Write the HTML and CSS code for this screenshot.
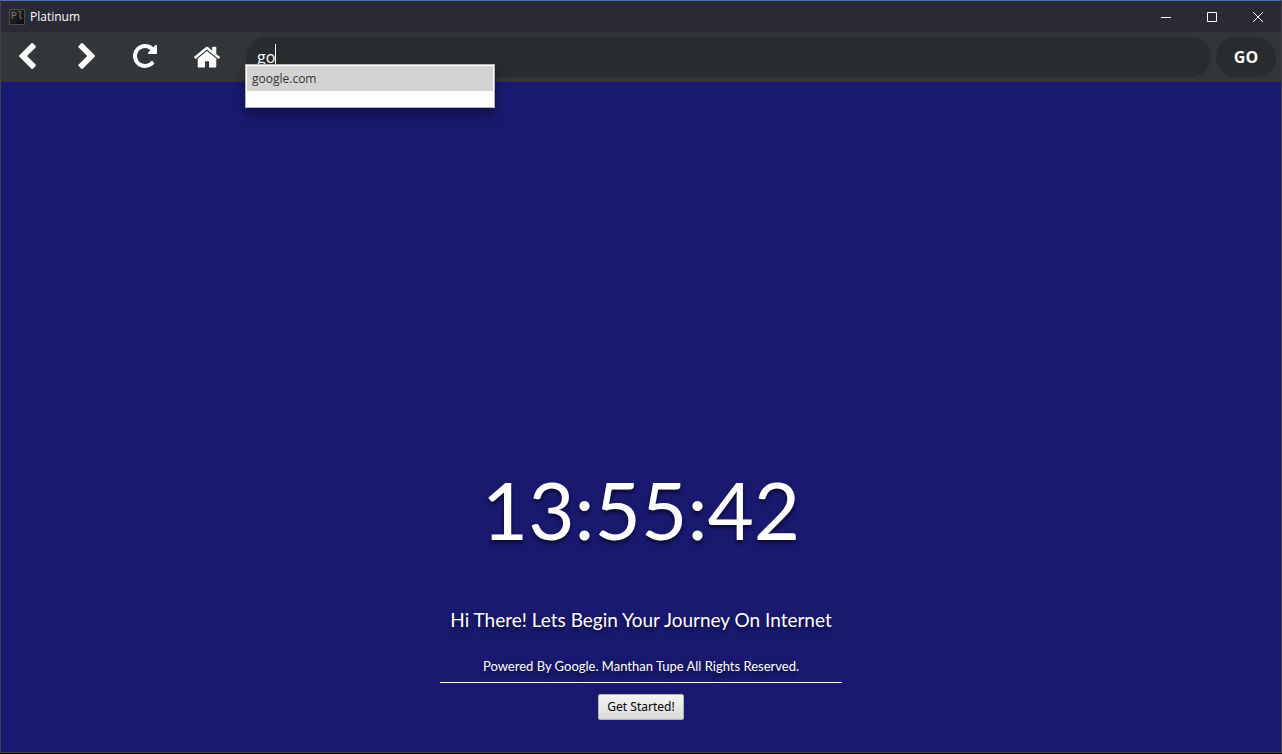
FILE: index.html
```html
<!DOCTYPE html>
<html lang="en">
<head>
<meta charset="utf-8">
<title>Platinum</title>
<link rel="stylesheet" href="styles.css">
</head>
<body>
<div class="window">
  <header class="titlebar">
    <span class="app-icon" aria-hidden="true">Pl</span>
    <h1 class="app-name">Platinum</h1>
    <div class="window-controls">
      <button class="window-button" type="button" aria-label="Minimize"><svg width="10" height="10" viewBox="0 0 10 10"><path d="M0 5.500h10"/></svg></button>
      <button class="window-button" type="button" aria-label="Maximize"><svg width="10" height="10" viewBox="0 0 10 10"><path d="M.5.500h9v9h-9z"/></svg></button>
      <button class="window-button" type="button" aria-label="Close"><svg width="10" height="10" viewBox="0 0 10 10"><path d="M0 0l10 10M10 0L0 10"/></svg></button>
    </div>
  </header>
  <nav class="toolbar">
    <button class="nav-button" type="button" aria-label="Back">
      <svg width="17" height="26" viewBox="154 26 1036 1612"><path d="M1171 301l-531 531 531 531q19 19 19 45t-19 45l-166 166q-19 19-45 19t-45-19l-742-742q-19-19-19-45t19-45l742-742q19-19 45-19t45 19l166 166q19 19 19 45t-19 45z"/></svg>
    </button>
    <button class="nav-button" type="button" aria-label="Forward">
      <svg width="23" height="26" viewBox="-290 26 1426 1612"><path transform="translate(1230 0) scale(-1 1)" d="M1171 301l-531 531 531 531q19 19 19 45t-19 45l-166 166q-19 19-45 19t-45-19l-742-742q-19-19-19-45t19-45l742-742q19-19 45-19t45 19l166 166q19 19 19 45t-19 45z"/></svg>
    </button>
    <button class="nav-button" type="button" aria-label="Reload">
      <svg width="24" height="24" viewBox="0 128 1536 1536"><path d="M1536 256v448q0 26-19 45t-45 19h-448q-42 0-59-40-17-39 14-69l138-138q-148-137-349-137-104 0-198.500 40.500t-163.500 109.500-109.500 163.500-40.500 198.500 40.500 198.500 109.500 163.500 163.500 109.500 198.500 40.500q119 0 225-52t179-147q7-10 23-12 15 0 25 9l137 138q9 8 9.500 20.500t-7.500 22.500q-109 132-264 204.500t-327 72.500q-156 0-298-61t-245-164-164-245-61-298 61-298 164-245 245-164 298-61q147 0 284.500 55.500t244.500 156.500l130-129q29-31 70-14 39 17 39 59z"/></svg>
    </button>
    <button class="nav-button" type="button" aria-label="Home">
      <svg width="26" height="24" viewBox="26 80 1612 1488"><path d="M1408 992v480q0 26-19 45t-45 19h-384v-384h-256v384h-384q-26 0-45-19t-19-45v-480q0-1 .5-3t.5-3l575-474 575 474q1 2 1 6zm223-69l-62 74q-8 9-21 11h-3q-13 0-21-7l-692-577-692 577q-12 8-24 7-13-2-21-11l-62-74q-8-10-7-23.500t11-21.500l719-599q32-26 76-26t76 26l244 204v-195q0-14 9-23t23-9h192q14 0 23 9t9 23v408l219 182q10 8 11 21.500t-7 23.500z"/></svg>
    </button>
    <form class="address">
      <div class="address-field">
        <input class="address-input" type="text" value="go" aria-label="Address" autocomplete="off">
        <span class="caret" aria-hidden="true"></span>
        <ul class="suggestions">
          <li class="suggestion">google.com</li>
        </ul>
      </div>
      <button class="go-button" type="button">GO</button>
    </form>
  </nav>
  <main class="start-page">
    <time class="clock">13:55:42</time>
    <p class="greeting">Hi There! Lets Begin Your Journey On Internet</p>
    <p class="credits">Powered By Google. Manthan Tupe All Rights Reserved.</p>
    <button class="start-button" type="button">Get Started!</button>
  </main>
</div>
</body>
</html>
```
FILE: styles.css
```css
* {
  box-sizing: border-box;
}

body {
  margin: 0;
  padding-bottom: 1px;
  background: #000;
  color: #fff;
  font-family: "Open Sans", "Noto Sans", sans-serif;
}

button {
  border: 0;
  padding: 0;
  background: none;
  color: inherit;
  font-family: inherit;
}

.window {
  display: flex;
  flex-direction: column;
  min-height: calc(100vh - 1px);
  border: 1px solid #40414a;
  border-top-color: #4a70b8;
  background: #191970;
}

.titlebar {
  display: flex;
  align-items: center;
  height: 31px;
  padding-left: 8px;
  background: #292a35;
}

.app-icon {
  width: 16px;
  height: 16px;
  border: 1px solid #4a4b4e;
  background: linear-gradient(135deg, #2b2b2b, #0c0c0c);
  color: #77787a;
  font: 10px/14px "Liberation Mono", monospace;
  text-align: center;
}

.app-name {
  margin: 0 0 0 5px;
  font-size: 12px;
  font-weight: 400;
  line-height: 16px;
}

.window-controls {
  display: flex;
  align-self: stretch;
  margin-left: auto;
}

.window-button {
  display: flex;
  align-items: center;
  justify-content: center;
  width: 46px;
}

.window-button svg {
  fill: none;
  stroke: #fff;
  overflow: visible;
}

.toolbar {
  display: flex;
  align-items: center;
  gap: 1px;
  height: 50px;
  padding-right: 5px;
  background: #323639;
}

.nav-button {
  display: flex;
  align-items: center;
  height: 50px;
  padding: 0 18px 2px;
}

.nav-button svg {
  fill: #fff;
}

.address {
  display: flex;
  flex: 1;
  gap: 5px;
  margin-left: 7px;
}

.address-field {
  position: relative;
  flex: 1;
}

.address-input {
  display: block;
  width: 100%;
  height: 40px;
  border: 0;
  border-radius: 20px;
  padding: 0 11px;
  outline: 0;
  background: #282c2f;
  color: #fff;
  font: 16px "Open Sans", sans-serif;
}

.caret {
  position: absolute;
  top: 7px;
  left: 29px;
  width: 1px;
  height: 22px;
  background: #fff;
}

.suggestions {
  position: absolute;
  top: 27px;
  left: -1px;
  z-index: 1;
  width: 250px;
  margin: 0;
  border: 1px solid #b4b4b4;
  padding: 1px 1px 16px;
  background: #fff;
  box-shadow: 0 6px 10px rgba(0, 0, 0, 0.4);
  list-style: none;
}

.suggestion {
  padding: 0 5px;
  background: #d3d3d3;
  color: #333;
  font-size: 12px;
  line-height: 25px;
}

.go-button {
  width: 60px;
  height: 40px;
  border-radius: 20px;
  background: #282c2f;
  font-size: 16px;
  font-weight: 700;
}

.start-page {
  display: flex;
  flex: 1;
  flex-direction: column;
  align-items: center;
  justify-content: flex-end;
  padding-bottom: 32px;
  font-family: Lato, sans-serif;
  text-shadow: 0 3px 4px rgba(0, 0, 0, 0.6);
}

.clock {
  margin-bottom: 51px;
  font-size: 80px;
  line-height: 96px;
}

.greeting {
  margin: 0 0 26px;
  font-size: 19px;
  line-height: 24px;
}

.credits {
  width: 402px;
  margin: 0 0 11px;
  border-bottom: 1px solid #fff;
  padding-bottom: 8px;
  font-size: 13px;
  line-height: 16px;
  text-align: center;
}

.start-button {
  height: 26px;
  border: 1px solid #b5b5b5;
  border-radius: 2px;
  padding: 0 8px 2px;
  background: linear-gradient(#f4f4f4, #dadada);
  color: #000;
  font: 12px "Noto Sans", sans-serif;
  text-shadow: none;
}
```
